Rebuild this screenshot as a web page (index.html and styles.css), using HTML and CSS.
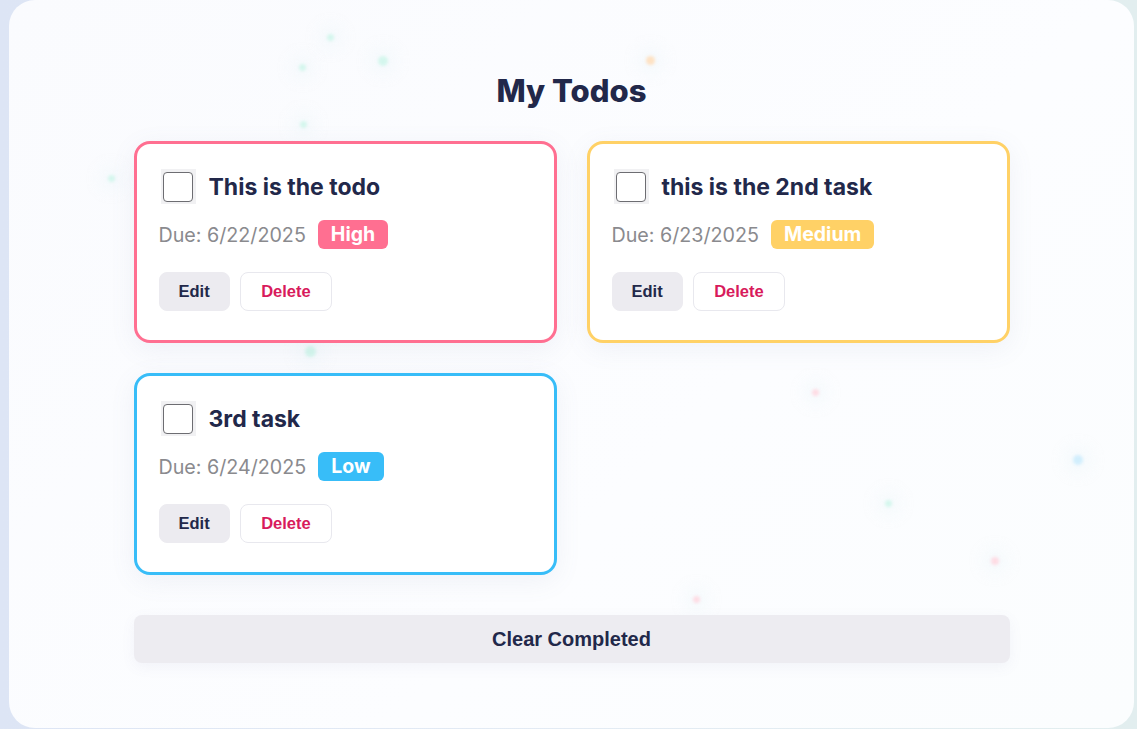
FILE: index.html
```html
<!DOCTYPE html>
<html lang="en">
<head>
<meta charset="utf-8">
<title>My Todos</title>
<link rel="stylesheet" href="styles.css">
</head>
<body>
<div class="app">
  <span class="dot mint" style="left:318px;top:34px"></span>
  <span class="dot mint" style="left:369px;top:56px;width:10px;height:10px"></span>
  <span class="dot mint" style="left:290px;top:64px"></span>
  <span class="dot mint" style="left:291px;top:121px"></span>
  <span class="dot mint" style="left:99px;top:175px"></span>
  <span class="dot mint" style="left:296px;top:346px;width:11px;height:11px"></span>
  <span class="dot orange" style="left:637px;top:56px;width:9px;height:9px"></span>
  <span class="dot pink" style="left:803px;top:389px"></span>
  <span class="dot blue" style="left:1064px;top:455px;width:10px;height:10px"></span>
  <span class="dot mint" style="left:876px;top:500px"></span>
  <span class="dot pink" style="left:982px;top:557px;width:8px;height:8px"></span>
  <span class="dot pink" style="left:684px;top:596px"></span>

  <main class="content">
    <h1 class="title">My Todos</h1>
    <section class="grid">
      <article class="card high">
        <div class="row-title">
          <span class="check"><span class="box"></span></span>
          <span class="name">This is the todo</span>
        </div>
        <div class="row-due">
          <span class="due">Due: 6/22/2025</span>
          <span class="badge">High</span>
        </div>
        <div class="row-actions">
          <button class="btn edit">Edit</button>
          <button class="btn delete">Delete</button>
        </div>
      </article>
      <article class="card medium">
        <div class="row-title">
          <span class="check"><span class="box"></span></span>
          <span class="name">this is the 2nd task</span>
        </div>
        <div class="row-due">
          <span class="due">Due: 6/23/2025</span>
          <span class="badge">Medium</span>
        </div>
        <div class="row-actions">
          <button class="btn edit">Edit</button>
          <button class="btn delete">Delete</button>
        </div>
      </article>
      <article class="card low">
        <div class="row-title">
          <span class="check"><span class="box"></span></span>
          <span class="name">3rd task</span>
        </div>
        <div class="row-due">
          <span class="due">Due: 6/24/2025</span>
          <span class="badge">Low</span>
        </div>
        <div class="row-actions">
          <button class="btn edit">Edit</button>
          <button class="btn delete">Delete</button>
        </div>
      </article>
    </section>
    <button class="clear">Clear Completed</button>
  </main>
</div>
</body>
</html>
```
FILE: styles.css
```css
* { box-sizing: border-box; }
html, body { height: 100%; }
body {
  margin: 0;
  background: linear-gradient(90deg, #dde5f5 0%, #e3ebf4 50%, #e2eeef 100%);
  font-family: Inter, "Noto Sans", sans-serif;
  overflow: hidden;
}
.app {
  position: relative;
  margin-left: 9px;
  width: 1125px;
  height: 728px;
  border-radius: 26px;
  background: linear-gradient(135deg, #fafbfe 0%, #fcfdff 60%, #fbfdfe 100%);
  overflow: hidden;
}
.dot {
  position: absolute;
  width: 7px;
  height: 7px;
  border-radius: 50%;
  filter: blur(1.5px);
  opacity: 0.75;
  box-shadow: 0 0 14px 8px rgba(235, 245, 250, 0.5);
}
.dot.mint { background: #c8f5e8; }
.dot.orange { background: #ffd9b0; }
.dot.pink { background: #ffd2dc; }
.dot.blue { background: #c4e9fc; }
.content {
  position: relative;
  width: 876px;
  margin: 0 auto;
  padding-top: 73px;
  display: flex;
  flex-direction: column;
}
.title {
  margin: 0 0 32px;
  text-align: center;
  font-size: 31px;
  line-height: 36px;
  font-weight: 800;
  color: #22284a;
}
.grid {
  display: grid;
  grid-template-columns: 423px 423px;
  gap: 30px;
}
.card {
  background: #fff;
  border: 3px solid;
  border-radius: 16px;
  padding: 25px 22px 29px 22px;
  box-shadow: 0 6px 26px rgba(110, 120, 170, 0.09);
  display: flex;
  flex-direction: column;
}
.card.high { border-color: #ff6f91; }
.card.medium { border-color: #ffd166; }
.card.low { border-color: #38bdf8; }
.row-title {
  display: flex;
  align-items: center;
  height: 35px;
  gap: 13px;
}
.check {
  margin-left: 2px;
  width: 35px;
  height: 35px;
  background: #f1f1f3;
  display: flex;
  align-items: center;
  justify-content: center;
}
.box {
  width: 30px;
  height: 30px;
  border: 1.5px solid #6d6d72;
  border-radius: 4px;
  background: #fff;
}
.name {
  font-size: 23px;
  font-weight: 700;
  color: #22284a;
  line-height: 1;
  padding-top: 1px;
}
.row-due {
  margin-top: 16px;
  display: flex;
  align-items: center;
  gap: 12px;
  height: 29px;
}
.due {
  font-size: 19.7px;
  color: #8a8a8e;
}
.badge {
  height: 29px;
  line-height: 29px;
  padding: 0 13px;
  border-radius: 6px;
  color: #fff;
  font-size: 19.5px;
  font-weight: 700;
}
.high .badge { background: #ff6f91; }
.medium .badge { background: #ffd166; }
.low .badge { background: #38bdf8; }
.row-actions {
  margin-top: 23px;
  display: flex;
  gap: 10px;
}
.btn {
  height: 39px;
  padding: 0 19px;
  border-radius: 8px;
  font-family: "Liberation Sans", Arial, sans-serif;
  font-size: 16.5px;
  font-weight: 700;
  cursor: pointer;
}
.btn.edit {
  background: #ecebf0;
  border: 1px solid #ecebf0;
  color: #22284a;
}
.btn.delete {
  background: #fff;
  border: 1px solid #e8e8ee;
  color: #d81b5c;
  padding: 0 20.5px;
}
.clear {
  margin-top: 40px;
  height: 48px;
  width: 100%;
  border: none;
  border-radius: 8px;
  background: #edecf1;
  color: #22284a;
  font-family: "Liberation Sans", Arial, sans-serif;
  font-size: 20px;
  font-weight: 700;
  box-shadow: 0 4px 14px rgba(110, 120, 170, 0.07);
}
```
